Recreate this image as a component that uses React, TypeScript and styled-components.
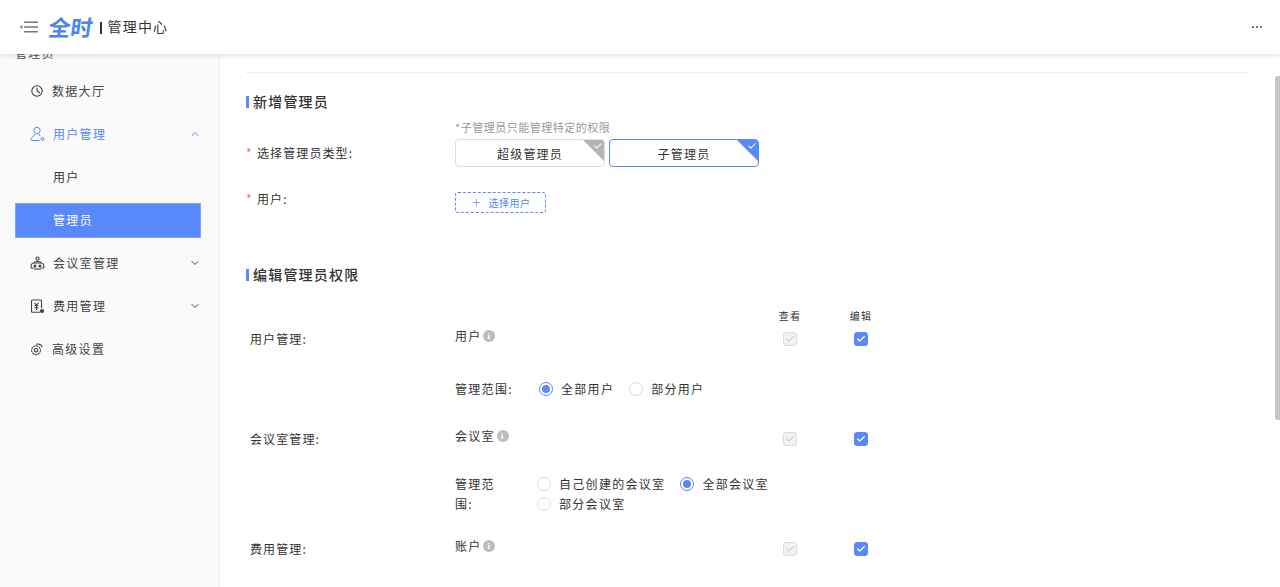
import React from "react";
import styled, { createGlobalStyle } from "styled-components";
import { Check, ChevronDown, ChevronUp, Plus } from "lucide-react";

const primary = "#5888f9";

const GlobalStyle = createGlobalStyle`
  html, body {
    margin: 0;
    height: 100%;
    overflow: hidden;
    background: #fff;
  }
  body {
    font-family: "Noto Sans CJK SC", "Noto Sans", sans-serif;
    color: #333;
  }
  * {
    box-sizing: border-box;
  }
`;

const Page = styled.div`
  position: relative;
  display: flex;
  flex-direction: column;
  height: 587px;
  overflow: hidden;
`;
const Header = styled.header`
  position: relative;
  z-index: 2;
  display: flex;
  align-items: center;
  flex: none;
  height: 54px;
  padding: 0 18px 0 19px;
  background: #fff;
  box-shadow: 0 1px 5px rgba(0, 0, 0, 0.14);
`;
const Logo = styled.span`
  display: inline-block;
  flex: none;
  width: 44px;
  margin: 0 0 3px 10px;
  font-size: 22px;
  line-height: 24px;
  font-weight: 700;
  color: #4a83f5;
  transform: skewX(-8deg);
`;
const Divider = styled.span`
  width: 1.5px;
  height: 12px;
  margin: 1px 6px 0 7px;
  background: #333;
`;
const AppName = styled.span`
  padding-bottom: 2px;
  font-size: 14px;
  letter-spacing: 1.2px;
  color: #333;
`;
const More = styled.span`
  display: flex;
  gap: 2px;
  margin-left: auto;
  i {
    width: 2px;
    height: 2px;
    background: #777;
  }
`;
const Body = styled.div`
  display: flex;
  flex: 1;
  min-height: 0;
`;
const Sidebar = styled.aside`
  flex: none;
  width: 220px;
  overflow: hidden;
  background: #fafafa;
  border-right: 1px solid #f3f3f3;
`;
const GroupLabel = styled.div`
  margin: -8px 0 10px 15px;
  font-size: 12px;
  line-height: 14px;
  letter-spacing: 1.3px;
  color: #555;
`;
const NavItem = styled.div<{ $open?: boolean }>`
  display: flex;
  align-items: center;
  gap: 8px;
  width: 186px;
  height: 43px;
  margin-left: 15px;
  padding: 0 0 0 15px;
  font-size: 12px;
  letter-spacing: 1.3px;
  color: ${(props) => (props.$open ? primary : "#444")};
  svg {
    flex: none;
    margin-bottom: 1px;
  }
  span {
    flex: 1;
    padding-bottom: 2px;
  }
`;
const SubItem = styled.div<{ $active?: boolean }>`
  display: flex;
  align-items: center;
  width: 186px;
  height: ${(props) => (props.$active ? "35px" : "43px")};
  margin: ${(props) => (props.$active ? "4px" : "0")} 0
    ${(props) => (props.$active ? "4px" : "0")} 15px;
  padding: 0 0 2px ${(props) => (props.$active ? "37px" : "38px")};
  font-size: 12px;
  letter-spacing: 1.3px;
  color: ${(props) => (props.$active ? "#fff" : "#333")};
  background: ${(props) => (props.$active ? primary : "transparent")};
  border: ${(props) => (props.$active ? "1px solid #7fa5fb" : "none")};
`;
const Main = styled.main`
  flex: 1;
  min-width: 0;
  overflow: hidden;
  padding: 18px 32px 0 26px;
`;
const Rule = styled.div`
  height: 1px;
  background: #ececec;
`;
const SectionTitle = styled.h2<{ $top: number }>`
  display: flex;
  align-items: center;
  gap: 4px;
  height: 20px;
  margin: ${(props) => props.$top}px 0 0;
  padding-bottom: 2px;
  font-size: 14px;
  font-weight: 500;
  letter-spacing: 1.2px;
  color: #333;
  &::before {
    content: "";
    width: 3px;
    height: 12px;
    margin-top: 2px;
    background: ${primary};
  }
`;
const FormRow = styled.div<{ $top: number; $end?: boolean }>`
  display: flex;
  align-items: ${(props) => (props.$end ? "flex-end" : "flex-start")};
  margin-top: ${(props) => props.$top}px;
`;
const FormLabel = styled.label<{ $tall?: boolean }>`
  display: flex;
  align-items: center;
  flex: none;
  width: 209px;
  height: ${(props) => (props.$tall ? "26px" : "12px")};
  margin-bottom: ${(props) => (props.$tall ? "2px" : "0")};
  font-size: 12px;
  letter-spacing: 1.1px;
  color: #333;
  &::before {
    content: "*";
    width: 11px;
    color: #f26d6d;
  }
`;
const Hint = styled.div`
  margin-bottom: 4px;
  font-size: 11px;
  line-height: 16px;
  letter-spacing: 0.5px;
  color: #999;
`;
const TypeCards = styled.div`
  display: flex;
  gap: 4px;
`;
const TypeCard = styled.div<{ $selected?: boolean }>`
  position: relative;
  display: flex;
  align-items: center;
  justify-content: center;
  width: 150px;
  height: 28px;
  overflow: hidden;
  border: 1px solid ${(props) => (props.$selected ? primary : "#ddd")};
  border-radius: 4px;
  font-size: 12px;
  letter-spacing: 1.2px;
  color: #333;
  &::after {
    content: "";
    position: absolute;
    top: -1px;
    right: -1px;
    border-style: solid;
    border-width: 0 23px 23px 0;
    border-color: transparent ${(props) => (props.$selected ? primary : "#b4b4b4")}
      transparent transparent;
  }
  svg {
    position: absolute;
    z-index: 1;
    top: 1px;
    right: 1px;
    color: #fff;
  }
`;
const SelectButton = styled.button`
  display: flex;
  align-items: center;
  justify-content: center;
  gap: 7px;
  width: 91px;
  height: 21px;
  padding: 0;
  border: 1px dashed ${primary};
  border-radius: 3px;
  background: #fff;
  font-family: inherit;
  font-size: 10px;
  letter-spacing: 0.5px;
  color: ${primary};
`;
const PermGrid = styled.div`
  display: grid;
  grid-template-columns: 205px 300px 70px 72px;
  margin: 24px 0 0 4px;
`;
const ColumnHead = styled.div<{ $col: number }>`
  grid-column: ${(props) => props.$col};
  height: 14px;
  margin-bottom: 6px;
  font-size: 10px;
  line-height: 14px;
  letter-spacing: 1.2px;
  text-align: center;
  color: #333;
`;
const PermLabel = styled.div<{ $top: number }>`
  grid-column: 1;
  margin-top: ${(props) => props.$top}px;
  font-size: 12px;
  line-height: 20px;
  letter-spacing: 1.1px;
  color: #333;
`;
const PermName = styled.div<{ $top: number }>`
  display: flex;
  align-items: center;
  gap: 2px;
  height: 13px;
  margin-top: ${(props) => props.$top}px;
  font-size: 12px;
  letter-spacing: 1.2px;
  color: #333;
`;
const InfoDot = styled.i`
  display: flex;
  align-items: center;
  justify-content: center;
  width: 12px;
  height: 12px;
  border-radius: 50%;
  background: #bdbdbd;
  font-size: 9px;
  font-family: "Liberation Serif", serif;
  font-weight: 700;
  font-style: normal;
  color: #fff;
`;
const CheckCell = styled.div<{ $top: number }>`
  display: flex;
  align-items: center;
  justify-content: center;
  height: 20px;
  margin-top: ${(props) => props.$top}px;
`;
const CheckBox = styled.span<{ $disabled?: boolean }>`
  display: flex;
  align-items: center;
  justify-content: center;
  width: 14px;
  height: 14px;
  border-radius: 3px;
  border: 1px solid ${(props) => (props.$disabled ? "#dcdcdc" : primary)};
  background: ${(props) => (props.$disabled ? "#f2f2f2" : primary)};
  color: ${(props) => (props.$disabled ? "#b5b5b5" : "#fff")};
`;
const RangeRow = styled.div<{ $top: number; $labelWidth: number }>`
  grid-column: 2 / 5;
  display: grid;
  grid-template-columns: ${(props) => props.$labelWidth}px 1fr;
  margin-top: ${(props) => props.$top}px;
  font-size: 12px;
  line-height: 20px;
  letter-spacing: 1.3px;
  color: #333;
`;
const RangeLabel = styled.div<{ $narrow?: boolean }>`
  max-width: ${(props) => (props.$narrow ? "48px" : "none")};
`;
const RadioGroup = styled.div`
  display: flex;
  flex-wrap: wrap;
  width: 250px;
  column-gap: 15px;
`;
const RadioOption = styled.div`
  display: flex;
  align-items: center;
  gap: 8px;
  height: 20px;
`;
const RadioMark = styled.span<{ $checked?: boolean }>`
  display: flex;
  align-items: center;
  justify-content: center;
  width: 14px;
  height: 14px;
  border-radius: 50%;
  background: #fff;
  border: 1px solid ${(props) => (props.$checked ? primary : "#dcdcdc")};
  &::after {
    content: "";
    display: ${(props) => (props.$checked ? "block" : "none")};
    width: 8px;
    height: 8px;
    border-radius: 50%;
    background: ${primary};
  }
`;
const ScrollThumb = styled.div`
  position: absolute;
  top: 76px;
  right: 0;
  width: 5px;
  height: 344px;
  border-radius: 3px 0 0 3px;
  background: #c6c6c6;
`;

const MenuIcon = () => (
  <svg width="20" height="12" viewBox="0 0 20 12" fill="none" stroke="#777" strokeWidth="1.6">
    <path d="M5 1.2h14M5 6h14M5 10.8h14" />
    <path d="M0.5 6 3.500 4.200v3.600z" fill="#777" stroke="none" />
  </svg>
);
const ClockIcon = () => (
  <svg width="14" height="14" viewBox="0 0 14 14" fill="none" stroke="#444" strokeWidth="1.1">
    <circle cx="7" cy="7" r="5.2" />
    <path d="M7 3.800V7l3 2" />
  </svg>
);
const UserIcon = () => (
  <svg width="15" height="16" viewBox="0 0 15 16" fill="none" stroke={primary} strokeWidth="1">
    <circle cx="7" cy="4.500" r="3.200" />
    <path d="M5.500 8 1 12.500c-.5 1 0 2 1 2h7.500M8.600 8l2 2.400" />
    <circle cx="12.500" cy="13" r="1.400" />
  </svg>
);
const MeetingIcon = () => (
  <svg width="15" height="14" viewBox="0 0 15 14" fill="none" stroke="#444" strokeWidth="1.1">
    <circle cx="7.500" cy="2.600" r="1.600" />
    <path d="M3.500 7c1-2 7-2 8 0M1 11c0-2.500 1-4 3-4h7c2 0 3 1.500 3 4 0 1.500-2 1.500-2.500.5M1 11c0 1.500 2 1.500 2.500.5" />
    <circle cx="5" cy="10" r="1" fill="#444" />
    <circle cx="10" cy="10" r="1" fill="#444" />
    <path d="M4 13h7" />
  </svg>
);
const FeeIcon = () => (
  <svg width="15" height="15" viewBox="0 0 15 15" fill="none" stroke="#444" strokeWidth="1.1">
    <path d="M10 13.300H2.500a1 1 0 0 1-1-1V2a1 1 0 0 1 1-1h8a1 1 0 0 1 1 1v7" />
    <path d="M4.500 3.800 6.500 6l2-2.200M4.500 6.500h4M4.500 8.800h4M6.500 6v5" />
    <circle cx="12" cy="12" r="1.500" fill="#444" />
  </svg>
);
const GearIcon = () => (
  <svg width="14" height="13" viewBox="0 0 14 13" fill="none" stroke="#444" strokeWidth="1.1">
    <circle cx="6" cy="7.200" r="1.700" />
    <circle cx="6" cy="7.200" r="4.400" strokeDasharray="2.400 0.500" />
    <path d="M6 1.200c2.800-.7 5.300.5 6.300 2.800" />
  </svg>
);

function Perm({ name, top, label }: { name: string; top: number; label: string }) {
  return (
    <>
      <PermLabel $top={top}>{label}</PermLabel>
      <PermName $top={top}>
        {name}
        <InfoDot>i</InfoDot>
      </PermName>
      <CheckCell $top={top}>
        <CheckBox $disabled>
          <Check size={10} strokeWidth={2} />
        </CheckBox>
      </CheckCell>
      <CheckCell $top={top}>
        <CheckBox>
          <Check size={10} strokeWidth={3} />
        </CheckBox>
      </CheckCell>
    </>
  );
}

function App() {
  return (
    <Page>
      <GlobalStyle />
      <Header>
        <MenuIcon />
        <Logo>全时</Logo>
        <Divider />
        <AppName>管理中心</AppName>
        <More>
          <i />
          <i />
          <i />
        </More>
      </Header>
      <Body>
        <Sidebar>
          <GroupLabel>管理员</GroupLabel>
          <NavItem>
            <ClockIcon />
            <span>数据大厅</span>
          </NavItem>
          <NavItem $open>
            <UserIcon />
            <span>用户管理</span>
            <ChevronUp size={12} />
          </NavItem>
          <SubItem>用户</SubItem>
          <SubItem $active>管理员</SubItem>
          <NavItem>
            <MeetingIcon />
            <span>会议室管理</span>
            <ChevronDown size={12} />
          </NavItem>
          <NavItem>
            <FeeIcon />
            <span>费用管理</span>
            <ChevronDown size={12} />
          </NavItem>
          <NavItem>
            <GearIcon />
            <span>高级设置</span>
          </NavItem>
        </Sidebar>
        <Main>
          <Rule />
          <SectionTitle $top={19}>新增管理员</SectionTitle>
          <FormRow $top={7} $end>
            <FormLabel $tall>选择管理员类型:</FormLabel>
            <div>
              <Hint>*子管理员只能管理特定的权限</Hint>
              <TypeCards>
                <TypeCard>
                  超级管理员
                  <Check size={10} strokeWidth={2.5} />
                </TypeCard>
                <TypeCard $selected>
                  子管理员
                  <Check size={10} strokeWidth={2.5} />
                </TypeCard>
              </TypeCards>
            </div>
          </FormRow>
          <FormRow $top={25}>
            <FormLabel>用户:</FormLabel>
            <SelectButton>
              <Plus size={11} strokeWidth={1.5} />
              选择用户
            </SelectButton>
          </FormRow>
          <SectionTitle $top={52}>编辑管理员权限</SectionTitle>
          <PermGrid>
            <ColumnHead $col={3}>查看</ColumnHead>
            <ColumnHead $col={4}>编辑</ColumnHead>
            <Perm label="用户管理:" name="用户" top={0} />
            <RangeRow $top={30} $labelWidth={84}>
              <RangeLabel>管理范围:</RangeLabel>
              <RadioGroup>
                <RadioOption>
                  <RadioMark $checked />
                  全部用户
                </RadioOption>
                <RadioOption>
                  <RadioMark />
                  部分用户
                </RadioOption>
              </RadioGroup>
            </RangeRow>
            <Perm label="会议室管理:" name="会议室" top={30} />
            <RangeRow $top={25} $labelWidth={82}>
              <RangeLabel $narrow>管理范围:</RangeLabel>
              <RadioGroup>
                <RadioOption>
                  <RadioMark />
                  自己创建的会议室
                </RadioOption>
                <RadioOption>
                  <RadioMark $checked />
                  全部会议室
                </RadioOption>
                <RadioOption>
                  <RadioMark />
                  部分会议室
                </RadioOption>
              </RadioGroup>
            </RangeRow>
            <Perm label="费用管理:" name="账户" top={25} />
          </PermGrid>
        </Main>
      </Body>
      <ScrollThumb />
    </Page>
  );
}

export default App;
